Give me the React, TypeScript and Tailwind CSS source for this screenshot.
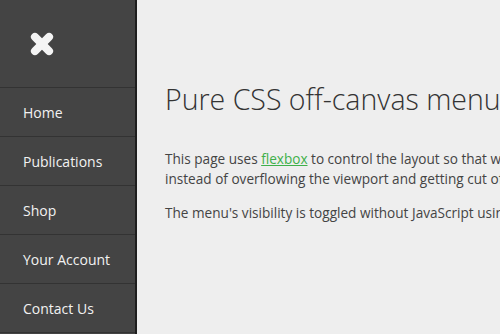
import React from "react";

const items = ["Home", "Publications", "Shop", "Your Account", "Contact Us"];

export default function App() {
  return (
    <div
      className="flex w-[500px] h-[334px] overflow-hidden bg-[#eeeeee]"
      style={{ fontFamily: '"Open Sans", "Liberation Sans", sans-serif' }}
    >
      <nav className="w-[137px] shrink-0 bg-[#444444] border-r-2 border-[#1e1e1e] flex flex-col">
        <div className="h-[88px] flex items-center pl-[28px] border-b border-[#333333]">
          <svg width="28" height="28" viewBox="0 0 28 28">
            <g transform="rotate(45 14 14)" fill="#f4f4f4">
              <rect x="10" y="0" width="8" height="28" rx="4" />
              <rect x="0" y="10" width="28" height="8" rx="4" />
            </g>
          </svg>
        </div>
        {items.map((t) => (
          <div
            key={t}
            className="h-[49px] flex items-center pl-[23px] border-b border-[#333333] text-[14px] text-[#f2f2f2]"
          >
            {t}
          </div>
        ))}
      </nav>
      <main className="flex-1 min-w-0 pl-[28px] pt-[79px] text-[#444444]">
        <h1 className="text-[28.5px] font-light leading-[40px] whitespace-nowrap text-[#333333] mb-[30px]">
          Pure CSS off-canvas menu
        </h1>
        <p className="text-[13.6px] leading-[20px] whitespace-nowrap mb-[14px]">
          This page uses{" "}
          <a className="text-[#3eb04a] underline" href="#">
            flexbox
          </a>{" "}
          to control the layout so that when the menu is open,
          <br />
          instead of overflowing the viewport and getting cut off.
        </p>
        <p className="text-[13.6px] leading-[20px] whitespace-nowrap">
          The menu's visibility is toggled without JavaScript using the checkbox hack.
        </p>
      </main>
    </div>
  );
}
